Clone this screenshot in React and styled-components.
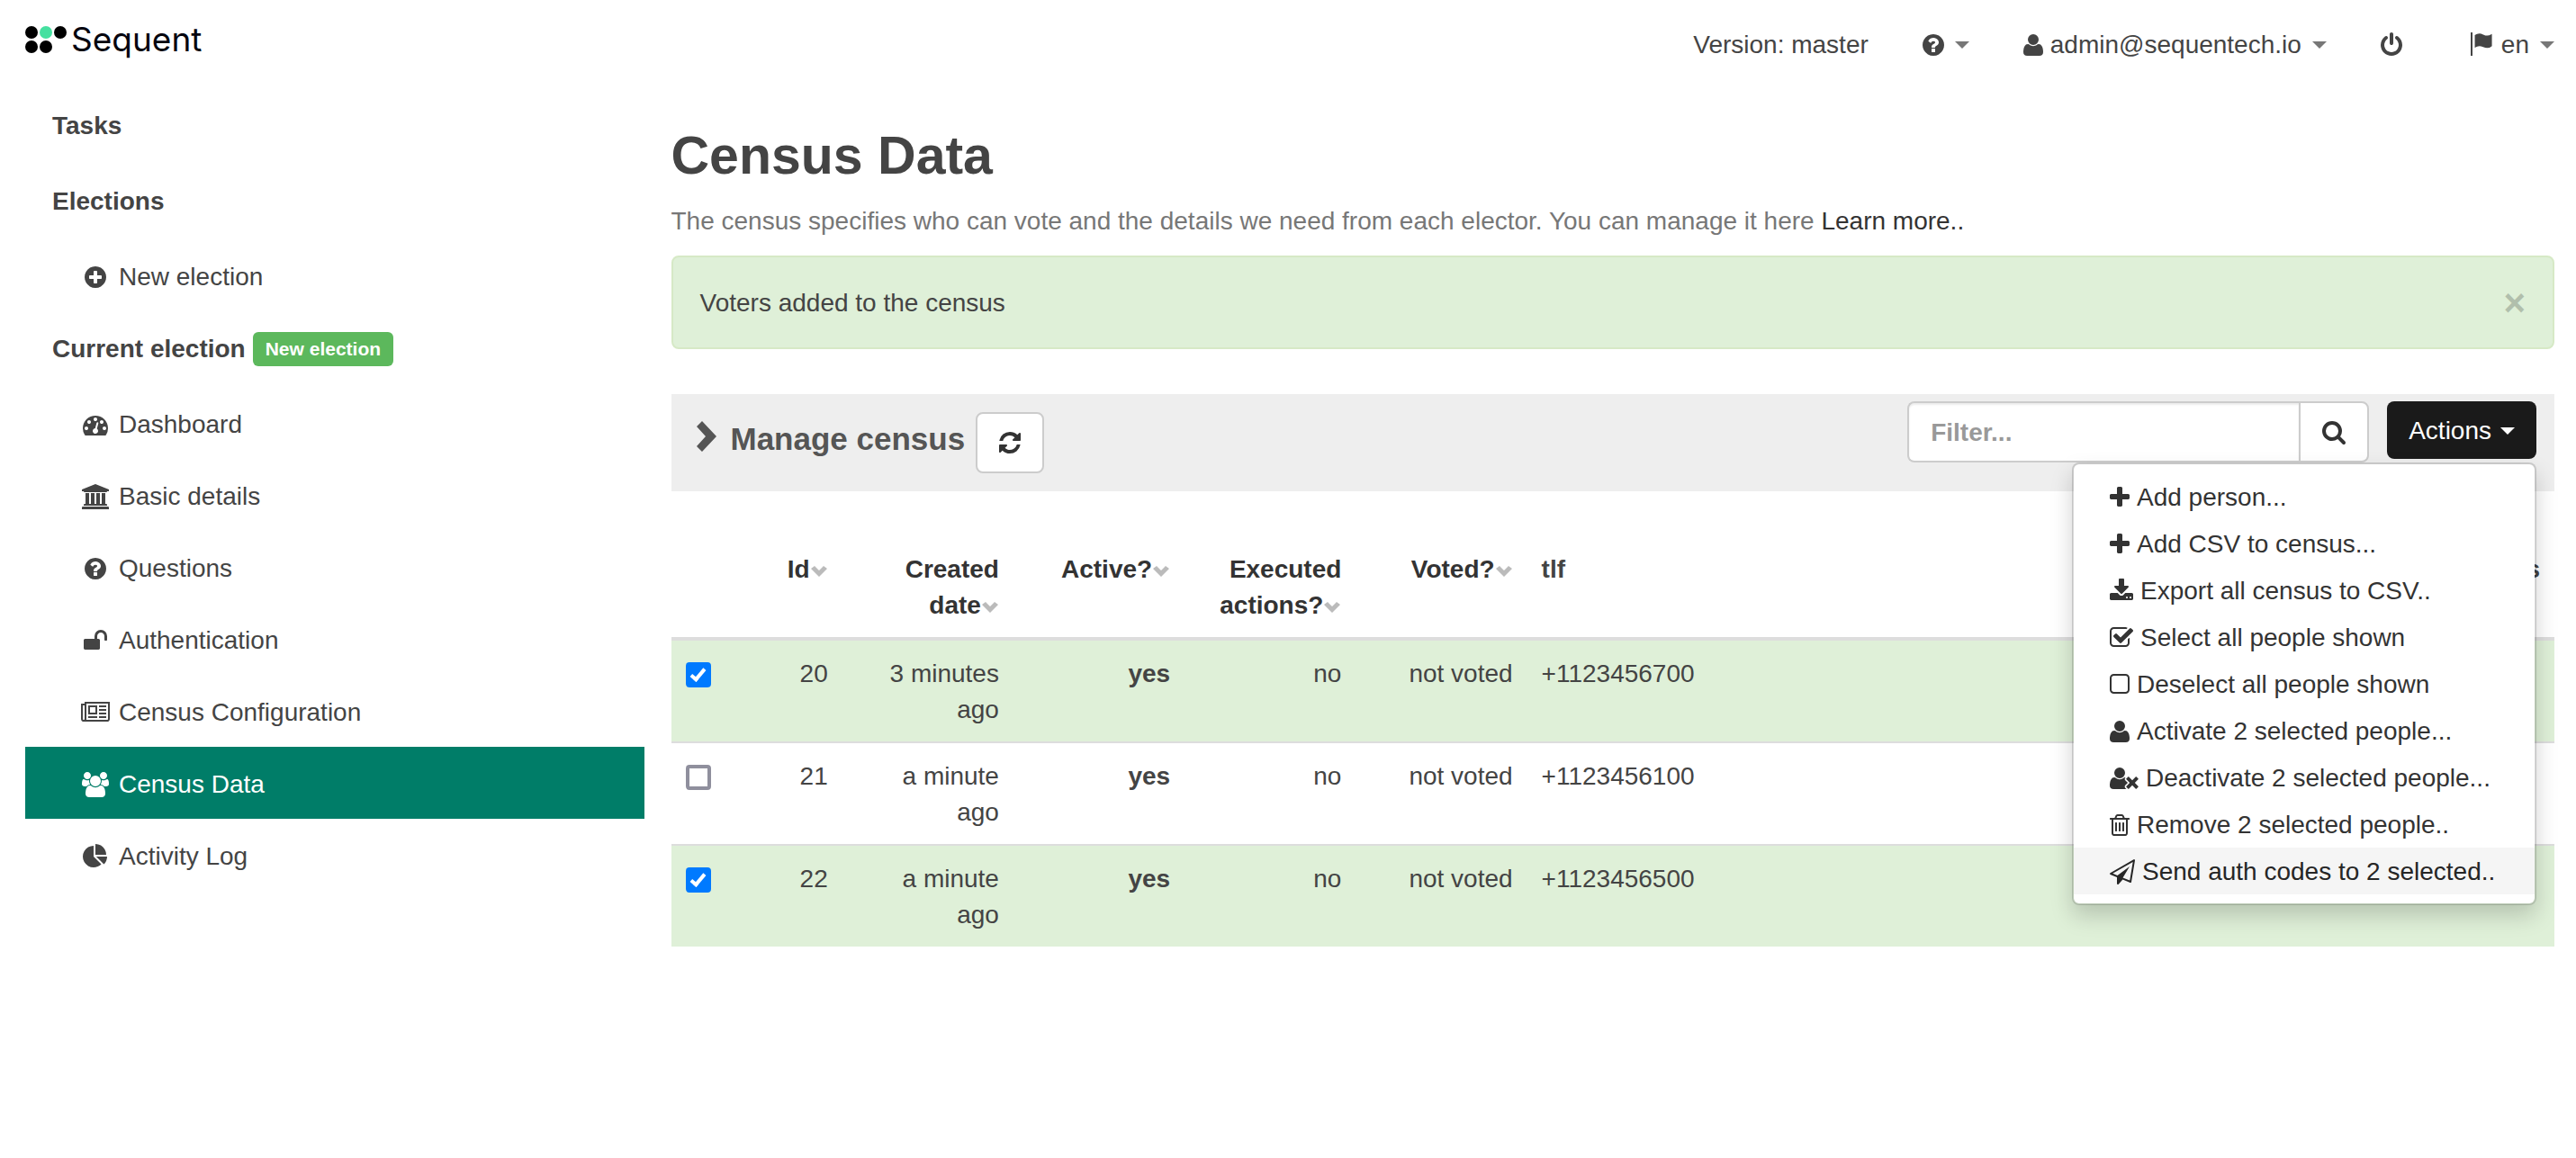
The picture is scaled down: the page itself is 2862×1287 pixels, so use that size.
import React, { useState } from "react";
import styled, { createGlobalStyle, css } from "styled-components";

const GlobalStyle = createGlobalStyle`
  *, *::before, *::after { box-sizing: border-box; }
  body {
    margin: 0;
    background: #fff;
    color: #444;
    font-family: "Helvetica Neue", "Liberation Sans", Arial, sans-serif;
    font-size: 28px;
    line-height: 40px;
  }
  a { color: inherit; text-decoration: none; }
  button, input { font: inherit; color: inherit; margin: 0; }
  button { cursor: pointer; }
`;

/* Each glyph: [left edge, advance width, path] on a 1792 unit em. */
const GLYPHS = {
  plusCircle: [128, 1536, "M1344 960v-128q0-26-19-45t-45-19h-256v-256q0-26-19-45t-45-19h-128q-26 0-45 19t-19 45v256h-256q-26 0-45 19t-19 45v128q0 26 19 45t45 19h256v256q0 26 19 45t45 19h128q26 0 45-19t19-45v-256h256q26 0 45-19t19-45zm320-64q0 209-103 385.5t-279.5 279.5-385.5 103-385.5-103-279.5-279.5-103-385.5 103-385.5 279.5-279.5 385.5-103 385.5 103 279.5 279.5 103 385.5z"],
  question: [128, 1536, "M1024 1376v-192q0-14-9-23t-23-9h-192q-14 0-23 9t-9 23v192q0 14 9 23t23 9h192q14 0 23-9t9-23zm256-672q0-88-55.5-163t-138.5-116-170-41q-243 0-371 213-15 24 8 42l132 100q7 6 19 6 16 0 25-12 53-68 86-92 34-24 86-24 48 0 85.5 26t37.5 59q0 38-20 61t-68 45q-63 28-115.5 86.5t-52.5 125.5v36q0 14 9 23t23 9h192q14 0 23-9t9-23q0-19 21.5-49.5t54.5-49.5q32-18 49-28.5t46-35 44.5-48 28-60.5 12.5-81zm384 192q0 209-103 385.5t-279.5 279.5-385.5 103-385.5-103-279.5-279.5-103-385.5 103-385.5 279.5-279.5 385.5-103 385.5 103 279.5 279.5 103 385.5z"],
  dashboard: [0, 1792, "M384 1152q0-53-37.5-90.5t-90.5-37.5-90.5 37.5-37.5 90.5 37.5 90.5 90.5 37.5 90.5-37.5 37.5-90.5zm192-448q0-53-37.5-90.5t-90.5-37.5-90.5 37.5-37.5 90.5 37.5 90.5 90.5 37.5 90.5-37.5 37.5-90.5zm428 481l101-382q6-26-7.5-48.5t-38.5-29.5-48 6.5-30 39.5l-101 382q-60 5-107 43.5t-63 98.5q-20 77 20 146t117 89 146-20 89-117q16-60-6-117t-72-91zm660-33q0-53-37.5-90.5t-90.5-37.5-90.5 37.5-37.5 90.5 37.5 90.5 90.5 37.5 90.5-37.5 37.5-90.5zm-640-640q0-53-37.5-90.5t-90.5-37.5-90.5 37.5-37.5 90.5 37.5 90.5 90.5 37.5 90.5-37.5 37.5-90.5zm448 192q0-53-37.5-90.5t-90.5-37.5-90.5 37.5-37.5 90.5 37.5 90.5 90.5 37.5 90.5-37.5 37.5-90.5zm320 448q0 261-141 483-19 29-54 29h-1402q-35 0-54-29-141-221-141-483 0-182 71-348t191-286 286-191 348-71 348 71 286 191 191 286 71 348z"],
  university: [0, 1920, "M960 0l960 384v128h-128q0 26-20.5 45t-48.5 19h-1526q-28 0-48.5-19t-20.5-45h-128v-128zm-704 640h256v768h128v-768h256v768h128v-768h256v768h128v-768h256v768h59q28 0 48.5 19t20.5 45v64h-1664v-64q0-26 20.5-45t48.5-19h59v-768zm1595 960q28 0 48.5 19t20.5 45v128h-1920v-128q0-26 20.5-45t48.5-19h1782z"],
  unlock: [64, 1664, "M1728 576v256q0 26-19 45t-45 19h-64q-26 0-45-19t-19-45v-256q0-106-75-181t-181-75-181 75-75 181v192h96q40 0 68 28t28 68v576q0 40-28 68t-68 28h-960q-40 0-68-28t-28-68v-576q0-40 28-68t68-28h672v-192q0-185 131.5-316.5t316.5-131.5 316.5 131.5 131.5 316.5z"],
  newspaper: [0, 2048, "M1024 512h-384v384h384v-384zm128 640v128h-640v-128h640zm0-768v640h-640v-640h640zm640 768v128h-512v-128h512zm0-256v128h-512v-128h512zm0-256v128h-512v-128h512zm0-256v128h-512v-128h512zm-1536 960v-960h-128v960q0 26 19 45t45 19 45-19 19-45zm1664 0v-1088h-1536v1088q0 33-11 64h1483q26 0 45-19t19-45zm128-1216v1216q0 80-56 136t-136 56h-1664q-80 0-136-56t-56-136v-1088h256v-128h1792z"],
  users: [0, 1920, "M593 896q-162 5-265 128h-134q-82 0-138-40.5t-56-118.5q0-353 124-353 6 0 43.5 21t97.5 42.5 119 21.5q67 0 133-23-5 37-5 66 0 139 81 256zm1071 637q0 120-73 189.5t-194 69.5h-874q-121 0-194-69.5t-73-189.5q0-53 3.5-103.5t14-109 26.5-108.5 43-97.5 62-81 85.5-53.5 111.5-20q10 0 43 21.5t73 48 107 48 135 21.5 135-21.5 107-48 73-48 43-21.5q61 0 111.5 20t85.5 53.5 62 81 43 97.5 26.5 108.5 14 109 3.5 103.5zm-1024-1277q0 106-75 181t-181 75-181-75-75-181 75-181 181-75 181 75 75 181zm704 384q0 159-112.5 271.5t-271.5 112.5-271.5-112.5-112.5-271.5 112.5-271.5 271.5-112.5 271.5 112.5 112.5 271.5zm576 225q0 78-56 118.5t-138 40.5h-134q-103-123-265-128 81-117 81-256 0-29-5-66 66 23 133 23 59 0 119-21.5t97.5-42.5 43.5-21q124 0 124 353zm-128-609q0 106-75 181t-181 75-181-75-75-181 75-181 181-75 181 75 75 181z"],
  pie: [0, 1792, "M768 890l546 546q-106 108-247.5 168t-298.5 60q-209 0-385.5-103t-279.5-279.5-103-385.5 103-385.5 279.5-279.5 385.5-103v762zm187 6h773q0 157-60 298.5t-168 247.5zm709-128h-768v-768q209 0 385.5 103t279.5 279.5 103 385.5z"],
  user: [192, 1408, "M1600 1405q0 120-73 189.5t-194 69.5h-874q-121 0-194-69.5t-73-189.5q0-53 3.5-103.5t14-109 26.5-108.5 43-97.5 62-81 85.5-53.5 111.5-20q9 0 42 21.5t74.5 48 108 48 133.5 21.5 133.5-21.5 108-48 74.5-48 42-21.5q61 0 111.5 20t85.5 53.5 62 81 43 97.5 26.5 108.5 14 109 3.5 103.5zm-320-893q0 159-112.5 271.5t-271.5 112.5-271.5-112.5-112.5-271.5 112.5-271.5 271.5-112.5 271.5 112.5 112.5 271.5z"],
  userTimes: [0, 2048, "M704 896q-159 0-271.5-112.5t-112.5-271.5 112.5-271.5 271.5-112.5 271.5 112.5 112.5 271.5-112.5 271.5-271.5 112.5zm1077 320l249 249q9 9 9 23 0 13-9 22l-136 136q-9 9-22 9-14 0-23-9l-249-249-249 249q-9 9-23 9-13 0-22-9l-136-136q-9-9-9-22 0-14 9-23l249-249-249-249q-9-9-9-23 0-13 9-22l136-136q9-9 22-9 14 0 23 9l249 249 249-249q9-9 23-9 13 0 22 9l136 136q9 9 9 22 0 14-9 23zm-498 0l-181 181q-37 37-37 91 0 53 37 90l83 83q-21 3-44 3h-874q-121 0-194-69t-73-190q0-53 3.5-103.5t14-109 26.5-108.5 43-97.5 62-81 85.5-53.5 111.5-20q19 0 39 17 154 122 319 122t319-122q20-17 39-17 28 0 57 6-28 27-41 50t-13 56q0 54 37 91z"],
  power: [128, 1536, "M1664 896q0 156-61 298t-164 245-245 164-298 61-298-61-245-164-164-245-61-298q0-182 80.5-343t226.5-270q43-32 95.5-25t83.5 50q32 42 24.5 94.5t-49.5 84.5q-98 74-151.5 181t-53.5 228q0 104 40.5 198.5t109.5 163.5 163.5 109.5 198.5 40.5 198.5-40.5 163.5-109.5 109.5-163.5 40.5-198.5q0-121-53.5-228t-151.5-181q-42-32-49.5-84.5t24.5-94.5q31-43 84-50t95 25q146 109 226.5 270t80.5 343zm-640-768v640q0 52-38 90t-90 38-90-38-38-90v-640q0-52 38-90t90-38 90 38 38 90z"],
  flag: [0, 1792, "M128 0h128v1664h-128zM420 190q150-110 330-110 110 0 270 75t290 75q110 0 326-120v860q-160 140-340 140-120 0-280-70t-270-70q-160 0-326 110z"],
  download: [64, 1664, "M1344 1344q0-26-19-45t-45-19-45 19-19 45 19 45 45 19 45-19 19-45zm256 0q0-26-19-45t-45-19-45 19-19 45 19 45 45 19 45-19 19-45zm128-224v320q0 40-28 68t-68 28h-1472q-40 0-68-28t-28-68v-320q0-40 28-68t68-28h465l135 136q58 56 136 56t136-56l136-136h464q40 0 68 28t28 68zm-325-569q17 41-14 70l-448 448q-18 19-45 19t-45-19l-448-448q-31-29-14-70 17-39 59-39h256v-448q0-26 19-45t45-19h256q26 0 45 19t19 45v448h256q42 0 59 39z"],
  plus: [192, 1408, "M1600 736v192q0 40-28 68t-68 28h-416v416q0 40-28 68t-68 28h-192q-40 0-68-28t-28-68v-416h-416q-40 0-68-28t-28-68v-192q0-40 28-68t68-28h416v-416q0-40 28-68t68-28h192q40 0 68 28t28 68v416h416q40 0 68 28t28 68z"],
  checkSquare: [64, 1664, "M1472 930v318q0 119-84.5 203.5t-203.5 84.5h-832q-119 0-203.5-84.5t-84.5-203.5v-832q0-119 84.5-203.5t203.5-84.5h832q63 0 117 25 15 7 18 23 3 17-9 29l-49 49q-10 10-23 10-3 0-9-2-23-6-45-6h-832q-66 0-113 47t-47 113v832q0 66 47 113t113 47h832q66 0 113-47t47-113v-254q0-13 9-22l64-64q10-10 23-10 6 0 12 3 20 8 20 29zm231-489l-814 814q-24 24-57 24t-57-24l-430-430q-24-24-24-57t24-57l110-110q24-24 57-24t57 24l263 263 647-647q24-24 57-24t57 24l110 110q24 24 24 57t-24 57z"],
  square: [192, 1408, "M1312 256h-832q-66 0-113 47t-47 113v832q0 66 47 113t113 47h832q66 0 113-47t47-113v-832q0-66-47-113t-113-47zm288 160v832q0 119-84.5 203.5t-203.5 84.5h-832q-119 0-203.5-84.5t-84.5-203.5v-832q0-119 84.5-203.5t203.5-84.5h832q119 0 203.5 84.5t84.5 203.5z"],
  trash: [192, 1408, "M704 736v576q0 14-9 23t-23 9h-64q-14 0-23-9t-9-23v-576q0-14 9-23t23-9h64q14 0 23 9t9 23zm256 0v576q0 14-9 23t-23 9h-64q-14 0-23-9t-9-23v-576q0-14 9-23t23-9h64q14 0 23 9t9 23zm256 0v576q0 14-9 23t-23 9h-64q-14 0-23-9t-9-23v-576q0-14 9-23t23-9h64q14 0 23 9t9 23zm128 724v-948h-896v948q0 22 7 40.5t14.5 27 10.5 8.5h832q3 0 10.5-8.5t14.5-27 7-40.5zm-672-1076h448l-48-117q-7-9-17-11h-317q-10 2-17 11zm928 32v64q0 14-9 23t-23 9h-96v948q0 83-47 143.5t-113 60.5h-832q-66 0-113-58.5t-47-141.5v-952h-96q-14 0-23-9t-9-23v-64q0-14 9-23t23-9h309l70-167q15-37 54-63t79-26h320q40 0 79 26t54 63l70 167h309q14 0 23 9t9 23z"],
  plane: [0, 1792, "M1764 11q33 24 27 64l-256 1536q-5 29-32 45-14 8-31 8-11 0-24-5l-527-215-298 327q-18 21-47 21-14 0-23-4-19-7-30-23.5t-11-36.5v-452l-472-193q-37-14-40-55-3-39 32-59l1664-960q35-21 68 2zm-342 1499l221-1323-1434 827 336 137 863-639-478 797z"],
  refresh: [128, 1536, "M1639 1056q0 5-1 7-64 268-268 434.5t-478 166.5q-146 0-282.5-55t-243.5-157l-129 129q-19 19-45 19t-45-19-19-45v-448q0-26 19-45t45-19h448q26 0 45 19t19 45-19 45l-137 137q71 66 161 102t187 36q134 0 250-65t186-179q11-17 53-117 8-23 30-23h192q13 0 22.5 9.5t9.5 22.5zm25-800v448q0 26-19 45t-45 19h-448q-26 0-45-19t-19-45 19-45l138-138q-148-137-349-137-134 0-250 65t-186 179q-11 17-53 117-8 23-30 23h-199q-13 0-22.5-9.5t-9.5-22.5v-7q65-268 270-434.5t480-166.5q146 0 284 55.5t245 156.5l130-129q19-19 45-19t45 19 19 45z"],
  search: [64, 1664, "M1216 832q0-185-131.5-316.5t-316.5-131.5-316.5 131.5-131.5 316.5 131.5 316.5 316.5 131.5 316.5-131.5 131.5-316.5zm512 832q0 52-38 90t-90 38q-54 0-90-38l-343-342q-179 124-399 124-143 0-273.5-55.5t-225-150-150-225-55.5-273.5 55.5-273.5 150-225 225-150 273.5-55.5 273.5 55.5 225 150 150 225 55.5 273.5q0 220-124 399l343 343q37 37 37 90z"],
};

const Glyph = styled.svg`
  height: 28px;
  width: auto;
  vertical-align: -4px;
  fill: currentColor;
  overflow: visible;
`;

function Icon({ name }) {
  const [left, width, path] = GLYPHS[name];
  return (
    <Glyph viewBox={`${left} 0 ${width} 1792`} width={width / 64} height="28" aria-hidden="true">
      <path d={path} />
    </Glyph>
  );
}

const Caret = styled.span`
  display: inline-block;
  vertical-align: middle;
  border: 8px solid transparent;
  border-top-color: ${(p) => (p.$muted ? "#777" : "currentColor")};
  border-bottom: 0;
`;

/* ---------- top bar ---------- */

const TopBar = styled.header`
  display: flex;
  justify-content: space-between;
  align-items: flex-start;
  padding: 22px 24px 28px 28px;
`;

const Brand = styled.a`
  display: flex;
  align-items: center;
  gap: 3px;
  color: #05050f;
  font-family: Inter, "Liberation Sans", sans-serif;
  font-size: 37px;
  line-height: 44px;
`;

const TopNav = styled.nav`
  display: flex;
  gap: 60px;
  padding-top: 8px;
`;

const TopItem = styled.a`
  display: flex;
  align-items: center;
  gap: 8px;
  white-space: nowrap;
  &:last-child { margin-left: 14px; }
  & > ${Caret} { margin-left: 4px; }
`;

/* ---------- page frame ---------- */

const Page = styled.div`
  display: grid;
  grid-template-columns: calc(25% - 15px) minmax(0, 1fr);
  gap: 30px;
  padding: 0 24px 0 28px;
`;

const Sidebar = styled.nav`
  display: flex;
  flex-direction: column;
`;

const GroupTitle = styled.a`
  display: flex;
  align-items: center;
  gap: 8px;
  padding: 22px 30px;
  font-weight: bold;
`;

const Badge = styled.span`
  padding: 0 14px;
  border-radius: 6px;
  background: #5cb85c;
  color: #fff;
  font-size: 21px;
  line-height: 38px;
`;

const SideLink = styled.a`
  display: flex;
  gap: 8px;
  padding: 22px 60px 18px;
  ${(p) => p.$active && css`
    background: #007d68;
    color: #fff;
  `}
`;

const IconSlot = styled.span`
  display: flex;
  justify-content: center;
  align-items: center;
  width: 36px;
`;

/* ---------- content ---------- */

const Main = styled.main`
  padding-top: 42px;
`;

const Title = styled.h1`
  margin: 0 0 20px;
  font-size: 59px;
  line-height: 66px;
`;

const Lead = styled.p`
  margin: 0 0 18px;
  color: #777;
  a { color: #333; }
`;

const Alert = styled.div`
  display: flex;
  justify-content: space-between;
  padding: 31px 30px 29px;
  border: 2px solid #d6e9c6;
  border-radius: 8px;
  background: #dff0d8;
`;

const CloseButton = styled.button`
  padding: 0;
  border: 0;
  background: none;
  color: #000;
  opacity: 0.2;
  font-size: 42px;
  font-weight: bold;
  line-height: 40px;
`;

const Toolbar = styled.section`
  display: flex;
  justify-content: space-between;
  align-items: flex-start;
  margin: 50px 0;
  padding: 0 20px 0 28px;
  background: #eee;
`;

const ToolbarHeading = styled.div`
  display: flex;
  align-items: flex-start;
  gap: 12px;
  padding: 20px 0;
`;

const ToolbarTitle = styled.h2`
  margin: 0;
  padding-top: 10px;
  color: #555;
  font-size: 35px;
  line-height: 40px;
  svg {
    margin-right: 16px;
    fill: currentColor;
    vertical-align: -2px;
  }
`;

const Button = styled.button`
  padding: 13px 24px 11px;
  border: 2px solid #ccc;
  border-radius: 8px;
  background: #fff;
  color: #333;
  line-height: 40px;
`;

const ToolbarControls = styled.div`
  display: flex;
  align-items: flex-start;
  gap: 20px;
  padding-top: 8px;
`;

const FilterForm = styled.form`
  display: flex;
  width: 513px;
`;

const FilterInput = styled.input`
  flex: 1;
  min-width: 0;
  height: 68px;
  padding: 13px 24px 11px;
  border: 2px solid #ccc;
  border-right: 0;
  border-radius: 8px 0 0 8px;
  background: #fff;
  box-shadow: inset 0 2px 2px rgba(0, 0, 0, 0.075);
  font-weight: bold;
  &::placeholder { color: #999; opacity: 1; }
`;

const SearchButton = styled(Button)`
  border-radius: 0 8px 8px 0;
`;

const Dropdown = styled.div`
  position: relative;
`;

const DarkButton = styled(Button)`
  display: flex;
  align-items: center;
  gap: 10px;
  border: 0;
  background: #1a1a1a;
  color: #fff;
`;

const Menu = styled.ul`
  position: absolute;
  top: calc(100% + 4px);
  right: 0;
  z-index: 10;
  min-width: 516px;
  margin: 0;
  padding: 10px 0;
  border: 2px solid rgba(0, 0, 0, 0.15);
  border-radius: 8px;
  background: #fff;
  background-clip: padding-box;
  box-shadow: 0 12px 24px rgba(0, 0, 0, 0.175);
  list-style: none;
`;

const MenuLink = styled.a`
  display: flex;
  align-items: center;
  gap: 8px;
  padding: 7px 40px 5px;
  background: ${(p) => (p.$active ? "#f5f5f5" : "transparent")};
  color: ${(p) => (p.$active ? "#262626" : "#333")};
  white-space: nowrap;
`;

const Table = styled.table`
  width: 100%;
  border-collapse: separate;
  border-spacing: 0;
  table-layout: fixed;
  tbody tr + tr > td { border-top: 2px solid #ddd; }
`;

const Col = styled.col`
  width: ${(p) => (p.$half ? "calc(100% / 22)" : p.$rest ? "auto" : "calc(100% / 11)")};
`;

const HeadCell = styled.th`
  padding: 17px 16px 15px;
  border-bottom: 4px solid #ddd;
  text-align: ${(p) => p.$align || "right"};
  vertical-align: top;
  a { color: #333; }
  svg { fill: #bbb; }
`;

const Row = styled.tr`
  background: ${(p) => (p.$selected ? "#dff0d8" : "#fff")};
`;

const Cell = styled.td`
  padding: 17px 16px 15px;
  text-align: ${(p) => p.$align || "right"};
  vertical-align: top;
  font-weight: ${(p) => (p.$strong ? "bold" : "normal")};
`;

const Checkbox = styled.input`
  display: grid;
  place-items: center;
  appearance: none;
  width: 28px;
  height: 28px;
  margin: 7px 0;
  border: 4px solid #8f8f9d;
  border-radius: 4px;
  background: #fff;
  &:checked {
    border-color: #007aff;
    background: #007aff;
  }
  &:checked::after {
    content: "";
    width: 9px;
    height: 17px;
    margin-bottom: 4px;
    border: solid #fff;
    border-width: 0 4px 4px 0;
    transform: rotate(40deg);
  }
`;

const SIDE_LINKS = [
  ["dashboard", "Dashboard"],
  ["university", "Basic details"],
  ["question", "Questions"],
  ["unlock", "Authentication"],
  ["newspaper", "Census Configuration"],
  ["users", "Census Data"],
  ["pie", "Activity Log"],
];

const ACTIONS = [
  ["plus", "Add person..."],
  ["plus", "Add CSV to census..."],
  ["download", "Export all census to CSV.."],
  ["checkSquare", "Select all people shown"],
  ["square", "Deselect all people shown"],
  ["user", "Activate 2 selected people..."],
  ["userTimes", "Deactivate 2 selected people..."],
  ["trash", "Remove 2 selected people.."],
  ["plane", "Send auth codes to 2 selected.."],
];

const SORTABLE = ["Id", "Created date", "Active?", "Executed actions?", "Voted?"];

const VOTERS = [
  { id: 20, created: "3 minutes ago", phone: "+1123456700", selected: true },
  { id: 21, created: "a minute ago", phone: "+1123456100", selected: false },
  { id: 22, created: "a minute ago", phone: "+1123456500", selected: true },
];

function SideItem({ icon, label, active }) {
  return (
    <SideLink href="#" $active={active} aria-current={active ? "page" : undefined}>
      <IconSlot><Icon name={icon} /></IconSlot>
      {label}
    </SideLink>
  );
}

function SortMark() {
  return (
    <svg width="20" height="14" viewBox="0 0 20 14" aria-hidden="true">
      <path d="M1 4l4-3 5 5 5-5 4 3-9 9z" />
    </svg>
  );
}

function VoterRow({ voter }) {
  const [checked, setChecked] = useState(voter.selected);
  return (
    <Row $selected={checked}>
      <Cell $align="left">
        <Checkbox
          type="checkbox"
          aria-label={`Select voter ${voter.id}`}
          checked={checked}
          onChange={(e) => setChecked(e.target.checked)}
        />
      </Cell>
      <Cell>{voter.id}</Cell>
      <Cell>{voter.created}</Cell>
      <Cell $strong>yes</Cell>
      <Cell>no</Cell>
      <Cell>not voted</Cell>
      <Cell $align="left">{voter.phone}</Cell>
      <Cell />
    </Row>
  );
}

export default function App() {
  return (
    <>
      <GlobalStyle />
      <TopBar>
        <Brand href="#">
          <svg width="48" height="32" viewBox="0 0 48 32" aria-hidden="true">
            <circle cx="7" cy="8" r="7" />
            <circle cx="23" cy="8" r="7" fill="#45e0a0" />
            <circle cx="39" cy="8" r="7" />
            <circle cx="7" cy="24" r="7" />
            <circle cx="23" cy="24" r="7" />
          </svg>
          Sequent
        </Brand>
        <TopNav>
          <TopItem href="#">Version: master</TopItem>
          <TopItem href="#" aria-label="Help"><Icon name="question" /><Caret $muted /></TopItem>
          <TopItem href="#"><Icon name="user" />admin@sequentech.io<Caret $muted /></TopItem>
          <TopItem href="#" aria-label="Log out"><Icon name="power" /></TopItem>
          <TopItem href="#"><Icon name="flag" />en<Caret $muted /></TopItem>
        </TopNav>
      </TopBar>
      <Page>
        <Sidebar>
          <GroupTitle href="#">Tasks</GroupTitle>
          <GroupTitle href="#">Elections</GroupTitle>
          <SideItem icon="plusCircle" label="New election" />
          <GroupTitle href="#">Current election <Badge>New election</Badge></GroupTitle>
          {SIDE_LINKS.map(([icon, label]) => (
            <SideItem key={label} icon={icon} label={label} active={label === "Census Data"} />
          ))}
        </Sidebar>
        <Main>
          <Title>Census Data</Title>
          <Lead>
            The census specifies who can vote and the details we need from each elector. You can manage it here{" "}
            <a href="#">Learn more..</a>
          </Lead>
          <Alert role="status">
            Voters added to the census
            <CloseButton type="button" aria-label="Close">×</CloseButton>
          </Alert>
          <Toolbar>
            <ToolbarHeading>
              <ToolbarTitle>
                <svg width="22" height="34" viewBox="0 0 22 34" aria-hidden="true">
                  <path d="M6 0l16 17-16 17-6-6 10-11-10-11z" />
                </svg>
                Manage census
              </ToolbarTitle>
              <Button type="button" aria-label="Refresh"><Icon name="refresh" /></Button>
            </ToolbarHeading>
            <ToolbarControls>
              <FilterForm onSubmit={(e) => e.preventDefault()}>
                <FilterInput type="text" placeholder="Filter..." aria-label="Filter" />
                <SearchButton type="submit" aria-label="Search"><Icon name="search" /></SearchButton>
              </FilterForm>
              <Dropdown>
                <DarkButton type="button" aria-haspopup="true" aria-expanded="true">
                  Actions<Caret />
                </DarkButton>
                <Menu>
                  {ACTIONS.map(([icon, label], i) => (
                    <li key={label}>
                      <MenuLink href="#" $active={i === ACTIONS.length - 1}>
                        <Icon name={icon} />{label}
                      </MenuLink>
                    </li>
                  ))}
                </Menu>
              </Dropdown>
            </ToolbarControls>
          </Toolbar>
          <Table>
            <colgroup>
              <Col $half />
              <Col $half />
              <Col />
              <Col />
              <Col />
              <Col />
              <Col $rest />
              <Col />
            </colgroup>
            <thead>
              <tr>
                <HeadCell />
                {SORTABLE.map((label) => (
                  <HeadCell key={label} scope="col"><a href="#">{label}<SortMark /></a></HeadCell>
                ))}
                <HeadCell scope="col" $align="left">tlf</HeadCell>
                <HeadCell scope="col">Actions</HeadCell>
              </tr>
            </thead>
            <tbody>
              {VOTERS.map((voter) => <VoterRow key={voter.id} voter={voter} />)}
            </tbody>
          </Table>
        </Main>
      </Page>
    </>
  );
}
